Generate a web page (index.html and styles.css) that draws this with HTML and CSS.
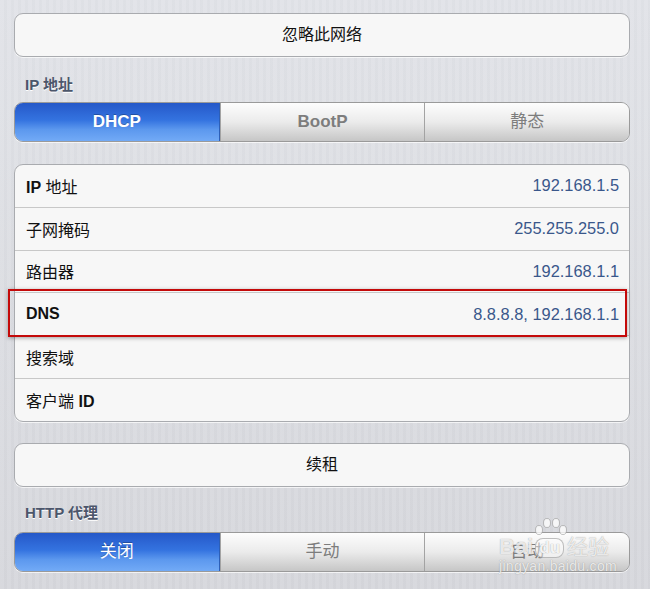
FILE: index.html
```html
<!DOCTYPE html>
<html lang="zh-CN">
<head>
    <meta charset="UTF-8">
    <title>网络设置</title>
    <link rel="stylesheet" href="styles.css">
</head>
<body>

<div class="page">
    <!-- 忽略网络 -->
    <div class="btn">忽略此网络</div>

    <div class="label">IP 地址</div>
    <div class="seg">
        <div class="seg-item on bold">DHCP</div>
        <div class="seg-item bold">BootP</div>
        <div class="seg-item">静态</div>
    </div>

    <!-- 地址信息 -->
    <div class="table">
        <div class="row"><span class="key"><b>IP</b> 地址</span><span class="val">192.168.1.5</span></div>
        <div class="row"><span class="key">子网掩码</span><span class="val">255.255.255.0</span></div>
        <div class="row"><span class="key">路由器</span><span class="val">192.168.1.1</span></div>
        <div class="row"><span class="key"><b>DNS</b></span><span class="val">8.8.8.8, 192.168.1.1</span></div>
        <div class="row"><span class="key">搜索域</span></div>
        <div class="row"><span class="key">客户端 <b>ID</b></span></div>
        <div class="mark"></div>
    </div>

    <div class="btn renew">续租</div>

    <div class="label label2">HTTP 代理</div>
    <div class="seg">
        <div class="seg-item on">关闭</div>
        <div class="seg-item">手动</div>
        <div class="seg-item">自动</div>
    </div>
</div>

<!-- 水印 -->
<div class="watermark">
    <div class="wm-top">
        <span class="wm-bai">Bai</span>
        <span class="wm-du">
            <svg class="wm-toes" width="34" height="20" viewBox="0 0 34 20">
                <ellipse cx="5" cy="13" rx="3.5" ry="4.5" />
                <ellipse cx="13" cy="6" rx="3.5" ry="4.5" />
                <ellipse cx="22" cy="6" rx="3.5" ry="4.5" />
                <ellipse cx="29" cy="13" rx="3.5" ry="4.5" />
            </svg>
            du
        </span>
        <span class="wm-jy">经验</span>
    </div>
    <div class="wm-url">jingyan.baidu.com</div>
</div>

</body>
</html>
```

FILE: styles.css
```css
body {
    margin: 0;
    width: 650px;
    height: 589px;
    overflow: hidden;
    position: relative;
    font-family: "Liberation Sans", "Noto Sans CJK SC", sans-serif;
    background-color: #dcdee3;
    background-image: repeating-linear-gradient(90deg, rgba(255,255,255,0.05) 0px, rgba(255,255,255,0.05) 4px, rgba(0,0,0,0.01) 4px, rgba(0,0,0,0.01) 7px),
        linear-gradient(#e1e3e8, #d6d7dc);
}
.page {
    padding: 13px 20px 0 14px;
}
.btn {
    height: 42px;
    line-height: 42px;
    border: 1px solid #a9abaf;
    border-radius: 9px;
    background: #f7f7f7;
    text-align: center;
    font-size: 16px;
    color: #111;
    box-shadow: 0 1px 0 rgba(255,255,255,0.7);
}
.label {
    margin: 19px 0 0 11px;
    height: 18px;
    line-height: 18px;
    font-size: 15px;
    font-weight: bold;
    color: #4c566b;
    text-shadow: 0 1px 0 #fff;
}
.label2 {
    margin-top: 17px;
}
.seg {
    display: flex;
    margin-top: 8px;
    height: 38px;
    border: 1px solid #9a9a9a;
    border-radius: 9px;
    overflow: hidden;
    box-shadow: 0 1px 0 rgba(255,255,255,0.7);
}
.label2 + .seg {
    margin-top: 10px;
}
.seg-item {
    flex: 1;
    line-height: 38px;
    text-align: center;
    font-size: 17px;
    color: #7d7d7d;
    background: linear-gradient(#fdfdfd, #ebebeb 50%, #c6c6c6);
    border-left: 1px solid #a3a3a3;
}
.seg-item:first-child {
    border-left: none;
}
.seg-item.bold {
    font-weight: bold;
}
.seg-item.on {
    color: #fff;
    background: linear-gradient(#2558c8, #3473e0 45%, #5c98ee 70%, #72aaf6);
    text-shadow: 0 -1px 0 rgba(0,0,0,0.25);
    border-right: 1px solid #2c5fb8;
}
.table {
    position: relative;
    margin-top: 22px;
    border: 1px solid #a9abaf;
    border-radius: 9px;
    background: #f7f7f7;
    box-shadow: 0 1px 0 rgba(255,255,255,0.7);
}
.row {
    display: flex;
    justify-content: space-between;
    align-items: center;
    height: 41.8px;
    padding: 0 10px 0 11px;
    border-top: 1px solid #c8c8c8;
}
.row:first-child {
    border-top: none;
}
.key {
    font-size: 16px;
    color: #111;
}
.key b {
    font-weight: bold;
}
.val {
    font-size: 16.4px;
    color: #3a578b;
}
.mark {
    position: absolute;
    left: -7px;
    top: 124px;
    width: 615px;
    height: 44px;
    border: 2px solid #c40a0a;
    box-shadow: 0 1px 4px rgba(0,0,0,0.35);
}
.renew {
    margin-top: 21px;
}
.watermark {
    position: absolute;
    left: 499px;
    top: 519px;
    color: rgba(255,255,255,0.8);
    text-shadow: 0 0 1px rgba(110,110,110,0.7);
}
.wm-top {
    display: flex;
    align-items: flex-end;
    height: 39px;
}
.wm-bai {
    font-size: 22px;
    font-weight: bold;
    line-height: 22px;
}
.wm-du {
    position: relative;
    margin-left: 2px;
    padding: 0 3px;
    height: 18px;
    line-height: 18px;
    font-size: 17px;
    font-weight: bold;
    border-radius: 8px;
    background: rgba(255,255,255,0.45);
    border: 1px solid rgba(150,150,150,0.6);
    color: rgba(255,255,255,0.9);
}
.wm-toes {
    position: absolute;
    left: -2px;
    top: -22px;
    fill: rgba(255,255,255,0.75);
    stroke: rgba(150,150,150,0.6);
    stroke-width: 1;
}
.wm-jy {
    font-size: 21px;
    line-height: 22px;
    margin-left: 3px;
}
.wm-url {
    font-size: 14px;
    margin-top: 0;
    letter-spacing: 0.3px;
}
```
